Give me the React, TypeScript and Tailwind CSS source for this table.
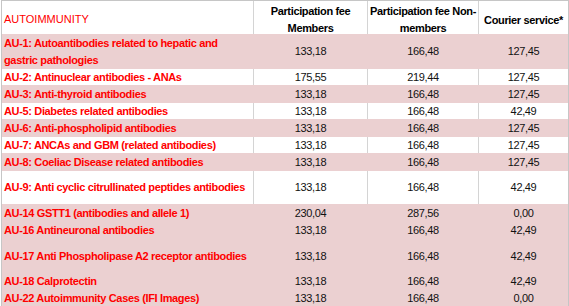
import React from "react";

type Row = {
  label: React.ReactNode;
  h: string;
  pink: boolean;
  vals: [string, string, string];
};

const top: Row[] = [
  {
    label: (
      <>
        AU-1: Autoantibodies related to hepatic and
        <br />
        gastric pathologies
      </>
    ),
    h: "h-[35px]",
    pink: true,
    vals: ["133,18", "166,48", "127,45"],
  },
  { label: "AU-2: Antinuclear antibodies - ANAs", h: "h-[16px]", pink: false, vals: ["175,55", "219,44", "127,45"] },
  { label: "AU-3: Anti-thyroid antibodies", h: "h-[18px]", pink: true, vals: ["133,18", "166,48", "127,45"] },
  { label: "AU-5: Diabetes related antibodies", h: "h-[16px]", pink: false, vals: ["133,18", "166,48", "42,49"] },
  { label: "AU-6: Anti-phospholipid antibodies", h: "h-[18px]", pink: true, vals: ["133,18", "166,48", "127,45"] },
  { label: "AU-7: ANCAs and GBM (related antibodies)", h: "h-[16px]", pink: false, vals: ["133,18", "166,48", "127,45"] },
  { label: "AU-8: Coeliac Disease related antibodies", h: "h-[18px]", pink: true, vals: ["133,18", "166,48", "127,45"] },
  { label: "AU-9: Anti cyclic citrullinated peptides antibodies", h: "h-[33px]", pink: false, vals: ["133,18", "166,48", "42,49"] },
  { label: "AU-14 GSTT1 (antibodies and allele 1)", h: "h-[18px]", pink: true, vals: ["230,04", "287,56", "0,00"] },
  { label: "AU-16 Antineuronal antibodies", h: "h-[17px]", pink: true, vals: ["133,18", "166,48", "42,49"] },
  { label: "AU-17 Anti Phospholipase A2 receptor antibodies", h: "h-[34px]", pink: true, vals: ["133,18", "166,48", "42,49"] },
  { label: "AU-18 Calprotectin", h: "h-[17px]", pink: true, vals: ["133,18", "166,48", "42,49"] },
  { label: "AU-22 Autoimmunity Cases (IFI Images)", h: "h-[17px]", pink: true, vals: ["133,18", "166,48", "0,00"] },
];

const cols = "grid grid-cols-[252px_114px_111px_90px]";

export default function App() {
  return (
    <div
      className="w-[569px] h-[306px] overflow-hidden bg-white text-[11px] tracking-[-0.35px]"
      style={{ fontFamily: '"Liberation Sans", Arial, sans-serif' }}
    >
      <div className="ml-px border-l border-t border-[#c6c6c6]">
        {/* Header */}
        <div className={`${cols} h-[33px] leading-[17px]`}>
          <div className="flex items-center pl-[2px] pt-[1px] text-[#ff0000] border-r border-[#d4d4d4] tracking-normal">
            AUTOIMMUNITY
          </div>
          <div className="flex items-center justify-center text-center font-bold text-black border-r border-[#d4d4d4] pt-[2px]">
            Participation fee
            <br />
            Members
          </div>
          <div className="flex items-center justify-center text-center font-bold text-black border-r border-[#d4d4d4] pt-[2px]">
            Participation fee Non-
            <br />
            members
          </div>
          <div className="flex items-center justify-center font-bold text-black border-r border-[#c6c6c6] pt-[3px]">
            Courier service*
          </div>
        </div>

        {/* Rows */}
        {top.map((r, i) => {
          const inner = r.pink ? "border-[#ebd0d1]" : "border-[#d4d4d4]";
          return (
            <div key={i} className={`${cols} ${r.h} leading-[17px] ${r.pink ? "bg-[#ebd0d1]" : "bg-white"}`}>
              <div className={`flex items-center pl-[2px] font-bold text-[#ff0000] border-r ${inner}`}>
                <span>{r.label}</span>
              </div>
              <div className={`flex items-center justify-center text-[#111] border-r ${inner}`}>{r.vals[0]}</div>
              <div className={`flex items-center justify-center text-[#111] border-r ${inner}`}>{r.vals[1]}</div>
              <div className="flex items-center justify-center text-[#111] border-r border-[#c6c6c6]">{r.vals[2]}</div>
            </div>
          );
        })}
      </div>
    </div>
  );
}
